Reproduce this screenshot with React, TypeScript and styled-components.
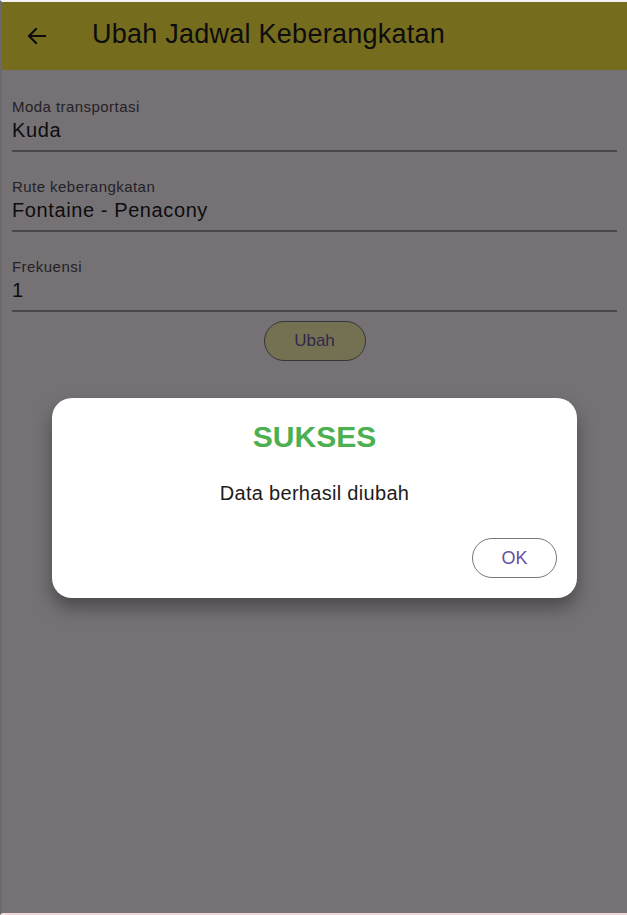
import React from "react";
import styled, { createGlobalStyle } from "styled-components";

const Global = createGlobalStyle`
  html, body { margin: 0; padding: 0; background: #ffffff; }
  body { font-family: "Liberation Sans", Arial, sans-serif; }
  * { box-sizing: border-box; }
`;

const Frame = styled.div`
  width: 627px;
  height: 915px;
  border-top: 2px solid #f2f2f2;
  border-left: 2px solid #6a6a6c;
  border-bottom: 2px solid #f3dada;
  position: relative;
  overflow: hidden;
  display: flex;
  flex-direction: column;
  background: #fef7ff;
`;

const AppBar = styled.header`
  height: 68px;
  background: #ffec42;
  display: flex;
  align-items: center;
  padding-left: 22px;
  gap: 42px;
  flex-shrink: 0;
`;

const BackButton = styled.div`
  width: 26px;
  height: 26px;
  display: flex;
  align-items: center;
  justify-content: center;
  color: #1d1b20;
`;

const Title = styled.h1`
  margin: 0 0 4px 0;
  font-size: 27px;
  font-weight: 400;
  color: #1d1b20;
  letter-spacing: 0.25px;
`;

const Form = styled.div`
  display: flex;
  flex-direction: column;
  padding: 29px 10px 0 10px;
`;

const Field = styled.div`
  display: flex;
  flex-direction: column;
  height: 80px;
`;

const Label = styled.div`
  font-size: 15px;
  line-height: 16px;
  color: #4f4a52;
  letter-spacing: 0.45px;
`;

const Value = styled.div`
  font-size: 20px;
  line-height: 24px;
  margin-top: 2.5px;
  color: #1d1b20;
  letter-spacing: 0.6px;
`;

const Underline = styled.div`
  margin-top: 8px;
  height: 2px;
  background: #a29ca4;
`;

const ButtonRow = styled.div`
  display: flex;
  justify-content: center;
  margin-top: -18px;
`;

const PillButton = styled.button`
  width: 102px;
  height: 40px;
  border-radius: 20px;
  border: 1px solid #79747e;
  background: #fcf5b4;
  color: #6a58a8;
  font-family: "Liberation Sans", Arial, sans-serif;
  font-size: 17px;
  padding: 0;
`;

const Overlay = styled.div`
  position: absolute;
  inset: 0;
  background: rgba(0, 0, 0, 0.54);
  display: flex;
  justify-content: center;
  padding-top: 396px;
`;

const Dialog = styled.div`
  width: 525px;
  height: 200px;
  background: #ffffff;
  border-radius: 20px;
  box-shadow: 0 10px 18px rgba(0, 0, 0, 0.35);
  display: flex;
  flex-direction: column;
  align-items: center;
  padding: 22px 20px 20px 20px;
`;

const DialogTitle = styled.div`
  font-size: 30px;
  font-weight: 700;
  color: #4caf50;
  line-height: 34px;
`;

const DialogText = styled.div`
  margin-top: 28px;
  font-size: 20px;
  line-height: 23px;
  color: #1d1b20;
  letter-spacing: 0.3px;
`;

const Actions = styled.div`
  align-self: stretch;
  display: flex;
  justify-content: flex-end;
  margin-top: auto;
`;

const OkButton = styled.button`
  width: 85px;
  height: 40px;
  border-radius: 20px;
  border: 1px solid #79747e;
  background: #ffffff;
  color: #6750a4;
  font-family: "Liberation Sans", Arial, sans-serif;
  font-size: 18px;
  padding: 0;
`;

const fields = [
  { label: "Moda transportasi", value: "Kuda" },
  { label: "Rute keberangkatan", value: "Fontaine - Penacony" },
  { label: "Frekuensi", value: "1" },
];

export default function App() {
  return (
    <>
      <Global />
      <Frame>
        <AppBar>
          <BackButton>
            <svg width="24" height="24" viewBox="0 0 24 24" fill="none">
              <path d="M20 12H4.5M11 5L4 12l7 7" stroke="currentColor" strokeWidth="2.2" strokeLinecap="square" />
            </svg>
          </BackButton>
          <Title>Ubah Jadwal Keberangkatan</Title>
        </AppBar>
        <Form>
          {fields.map((f) => (
            <Field key={f.label}>
              <Label>{f.label}</Label>
              <Value>{f.value}</Value>
              <Underline />
            </Field>
          ))}
          <ButtonRow>
            <PillButton>Ubah</PillButton>
          </ButtonRow>
        </Form>
        <Overlay>
          <Dialog>
            <DialogTitle>SUKSES</DialogTitle>
            <DialogText>Data berhasil diubah</DialogText>
            <Actions>
              <OkButton>OK</OkButton>
            </Actions>
          </Dialog>
        </Overlay>
      </Frame>
    </>
  );
}
